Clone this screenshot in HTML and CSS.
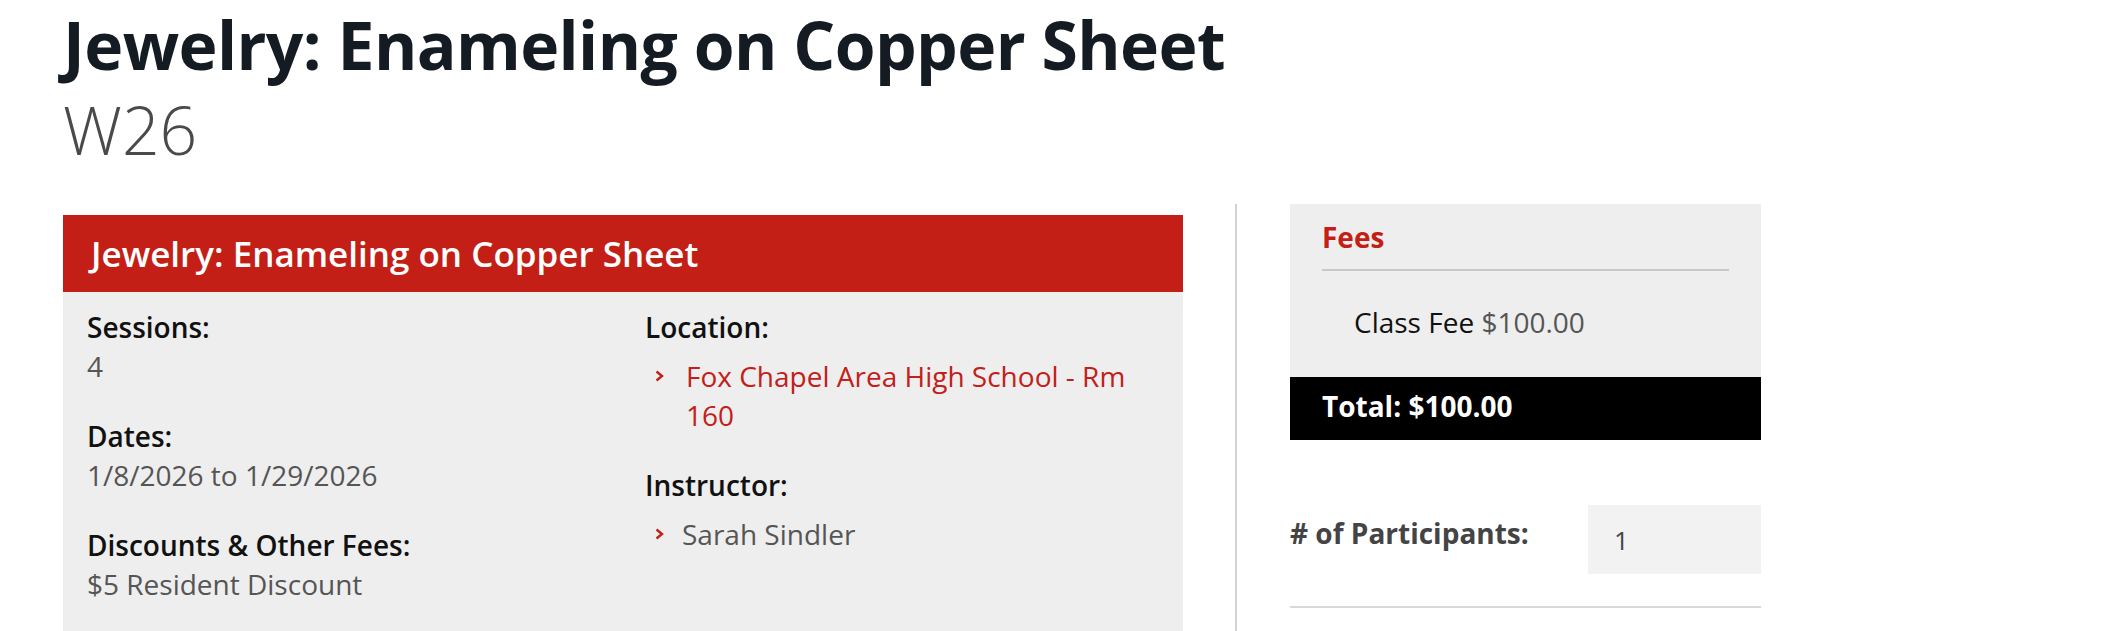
FILE: index.html
```html
<!DOCTYPE html>
<html lang="en">
<head>
  <meta charset="UTF-8" />
  <meta name="viewport" content="width=device-width, initial-scale=1" />
  <title>Jewelry: Enameling on Copper Sheet</title>
  <link rel="stylesheet" href="styles.css">
</head>
<body>
  <main class="page">
    <header class="course-head">
      <h1>Jewelry: Enameling on Copper Sheet</h1>
      <div class="term">W26</div>
    </header>

    <div class="layout">
      <section class="course-card" aria-label="Class details">
        <h2 class="card-title">Jewelry: Enameling on Copper Sheet</h2>
        <div class="card-body">
          <dl class="field-list">
            <div class="field">
              <dt>Sessions:</dt>
              <dd>4</dd>
            </div>
            <div class="field">
              <dt>Dates:</dt>
              <dd>1/8/2026 to 1/29/2026</dd>
            </div>
            <div class="field">
              <dt>Discounts &amp; Other Fees:</dt>
              <dd>$5 Resident Discount</dd>
            </div>
          </dl>

          <dl class="field-list">
            <div class="field">
              <dt>Location:</dt>
              <dd>
                <ul class="arrow-list">
                  <li>
                    <svg class="chev" width="9" height="12" viewBox="0 0 9 12" aria-hidden="true"><polyline points="1.5,1.5 7,6 1.5,10.5" /></svg>
                    <a href="#" class="link">Fox Chapel Area High School - Rm 160</a>
                  </li>
                </ul>
              </dd>
            </div>
            <div class="field">
              <dt>Instructor:</dt>
              <dd>
                <ul class="arrow-list">
                  <li>
                    <svg class="chev" width="9" height="12" viewBox="0 0 9 12" aria-hidden="true"><polyline points="1.5,1.5 7,6 1.5,10.5" /></svg>
                    Sarah Sindler
                  </li>
                </ul>
              </dd>
            </div>
          </dl>
        </div>
      </section>

      <aside class="order">
        <div class="fees">
          <h3 class="fees-title">Fees</h3>
          <div class="fee-row">Class Fee <span class="fee-amount">$100.00</span></div>
        </div>
        <div class="total">Total: $100.00</div>

        <div class="participants">
          <label for="participants">
            # of Participants:
          </label>
          <input id="participants" type="text" value="1" />
        </div>
      </aside>
    </div>
  </main>
</body>
</html>
```

FILE: styles.css
```css
/* Reset */
*, *::before, *::after {
  box-sizing: border-box;
}

body {
  margin: 0;
  background: #fff;
  font-family: 'Open Sans', 'Liberation Sans', sans-serif;
  color: #111;
}

.page {
  padding: 8px 0 0 63px;
}

/* Page heading */
.course-head h1 {
  margin: 0;
  font-size: 66px;
  font-weight: 700;
  line-height: 72px;
  letter-spacing: -0.6px;
  color: #141b22;
}

.term {
  margin-top: 13px;
  font-size: 66px;
  font-weight: 300;
  line-height: 72px;
  color: #4a4a4a;
}

.layout {
  display: flex;
  align-items: flex-start;
  margin-top: 39px;
}

/* Left card */
.course-card {
  width: 1120px;
  margin-top: 11px;
  background: #eeeeee;
  min-height: 416px;
}

.card-title {
  margin: 0;
  padding: 0 28px;
  background: #c41f16;
  color: #fff;
  font-size: 35px;
  font-weight: 600;
  line-height: 77px;
}

.card-body {
  display: grid;
  grid-template-columns: 534px 1fr;
  column-gap: 24px;
  padding: 16px 24px;
}

.field-list {
  margin: 0;
}

.field + .field {
  margin-top: 31px;
}

.field dt {
  font-size: 28px;
  font-weight: 600;
  line-height: 39px;
  color: #111;
}

.field dd {
  margin: 0;
  font-size: 28px;
  line-height: 39px;
  color: #555;
}

.arrow-list {
  list-style: none;
  margin: 10px 0 0 0;
  padding: 0;
}

.arrow-list li {
  position: relative;
  padding-left: 37px;
}

.chev {
  position: absolute;
  left: 10px;
  top: 13px;
}
.chev polyline {
  fill: none;
  stroke: #c41f16;
  stroke-width: 2.4;
}

.link {
  display: inline-block;
  padding-left: 4px;
  color: #c3201a;
  text-decoration: none;
}

/* Right column */
.order {
  width: 526px;
  margin-left: 52px;
  padding: 0 0 24px 53px;
  border-left: 2px solid #d5d1cf;
}

.fees {
  background: #eeeeee;
  padding: 14px 32px 35px;
}

.fees-title {
  margin: 0;
  padding-bottom: 12px;
  border-bottom: 2px solid #c8c8c8;
  font-size: 28px;
  font-weight: 700;
  line-height: 39px;
  color: #c41f16;
}

.fee-row {
  margin-top: 32px;
  padding-left: 32px;
  font-size: 28px;
  line-height: 39px;
  color: #111;
}

.fee-amount {
  color: #555;
}

.total {
  padding: 10px 32px 14px;
  background: #000;
  color: #fff;
  font-size: 28px;
  font-weight: 700;
  line-height: 39px;
}

.participants {
  display: flex;
  justify-content: space-between;
  align-items: flex-start;
  margin-top: 65px;
  padding-bottom: 32px;
  border-bottom: 2px solid #d9d9d9;
}

.participants label {
  padding-top: 9px;
  font-size: 28px;
  font-weight: 700;
  line-height: 39px;
  color: #444;
}

.participants input {
  width: 173px;
  height: 69px;
  padding: 0 0 0 26px;
  border: none;
  background: #f2f2f2;
  font-family: inherit;
  font-size: 26px;
  color: #444;
}
```
